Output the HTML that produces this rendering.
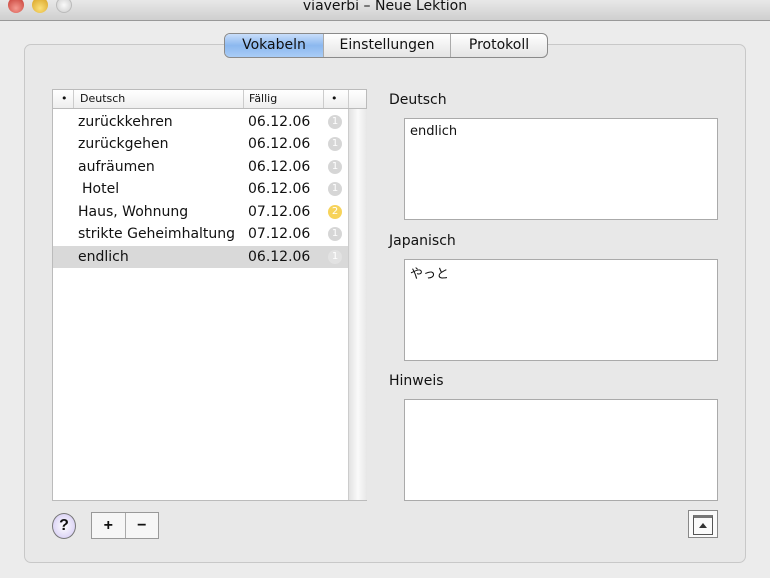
<!DOCTYPE html><html><head><meta charset="utf-8"><style>
body{margin:0;width:770px;height:578px;overflow:hidden;background:#ececec;font-family:"DejaVu Sans","Noto Sans CJK JP",sans-serif;position:relative;color:#111}
.a{position:absolute}
.title{left:0;top:0;width:770px;height:20px;background:linear-gradient(#e8e8e8,#cfcfcf);border-bottom:1px solid #999;text-align:center;font-size:14px;line-height:14px}
.light{top:-3px;width:16px;height:16px;border-radius:50%}
.group{left:24px;top:44px;width:720px;height:517px;border:1px solid #c8c8c8;border-radius:7px;background:#e8e8e8}
.tabs{left:224px;top:33px;height:23px;border:1px solid #8a8a8a;border-radius:6px;background:linear-gradient(#fff,#e4e4e4);display:flex;font-size:14px;overflow:hidden}
.tabs div{line-height:23px;border-left:1px solid #aaa;text-align:center}
.tabs div:first-child{border:0;background:linear-gradient(#c9defb,#8cb8ef 50%,#a9ccf6)}
.table{left:52px;top:89px;width:313px;height:410px;background:#fff;border:1px solid #bbb}
.hdr{left:0;top:0;width:313px;height:18px;border-bottom:1px solid #bbb;font-size:11px;line-height:18px;background:linear-gradient(#fff,#eee)}
.row{left:0;width:295px;height:22px;font-size:14px;line-height:22px}
.num{position:absolute;left:275px;top:4px;width:14px;height:14px;border-radius:50%;background:#d6d6d6;color:#fff;font-size:10px;line-height:14px;text-align:center}
.sb{left:295px;top:19px;width:18px;height:391px;background:linear-gradient(90deg,#e2e2e2,#fafafa,#e6e6e6);border-left:1px solid #ccc}
.lbl{left:389px;font-size:14px}
.box{left:404px;width:312px;height:100px;background:#fff;border:1px solid #aaa;font-size:13px}
</style></head><body>
<div class="a title"><span style="position:relative;top:-1px">viaverbi – Neue Lektion</span></div>
<div class="a light" style="left:8px;background:radial-gradient(circle at 50% 70%,#f59a90,#c0322a)"></div>
<div class="a light" style="left:32px;background:radial-gradient(circle at 50% 70%,#fbe07a,#d49a18)"></div>
<div class="a light" style="left:56px;background:radial-gradient(#fafafa,#ccc);border:1px solid #bbb;width:14px;height:14px"></div>
<div class="a group"></div>
<div class="a tabs"><div style="width:98px">Vokabeln</div><div style="width:126px">Einstellungen</div><div style="width:96px">Protokoll</div></div>
<div class="a table">
<div class="a hdr"><span class="a" style="left:8px">•</span><span class="a" style="left:20px;border-left:1px solid #ccc;padding-left:6px;top:0;height:18px">Deutsch</span><span class="a" style="left:190px;border-left:1px solid #ccc;padding-left:5px;height:18px">Fällig</span><span class="a" style="left:270px;border-left:1px solid #ccc;padding-left:7px;width:20px;height:18px">•</span><span class="a" style="left:295px;border-left:1px solid #ccc;height:18px"></span></div>
<div class="a sb"></div>
<div class="a row" style="top:21px"><span class="a" style="left:25px">zurückkehren</span><span class="a" style="left:195px">06.12.06</span><span class="num">1</span></div>
<div class="a row" style="top:43px"><span class="a" style="left:25px">zurückgehen</span><span class="a" style="left:195px">06.12.06</span><span class="num">1</span></div>
<div class="a row" style="top:66px"><span class="a" style="left:25px">aufräumen</span><span class="a" style="left:195px">06.12.06</span><span class="num">1</span></div>
<div class="a row" style="top:88px"><span class="a" style="left:29px">Hotel</span><span class="a" style="left:195px">06.12.06</span><span class="num">1</span></div>
<div class="a row" style="top:111px"><span class="a" style="left:25px">Haus, Wohnung</span><span class="a" style="left:195px">07.12.06</span><span class="num" style="background:#f7d35a">2</span></div>
<div class="a row" style="top:133px"><span class="a" style="left:25px">strikte Geheimhaltung</span><span class="a" style="left:195px">07.12.06</span><span class="num">1</span></div>
<div class="a row" style="top:156px;background:#d9d9d9"><span class="a" style="left:25px">endlich</span><span class="a" style="left:195px">06.12.06</span><span class="num" style="background:#e2e2e2">1</span></div>
</div>
<div class="a lbl" style="top:92px">Deutsch</div>
<div class="a box" style="top:118px"><div style="padding:5px 5px">endlich</div></div>
<div class="a lbl" style="top:233px">Japanisch</div>
<div class="a box" style="top:259px"><div style="padding:3px 5px">やっと</div></div>
<div class="a lbl" style="top:373px">Hinweis</div>
<div class="a box" style="top:399px"></div>
<div class="a" style="left:52px;top:513px;width:22px;height:24px;border-radius:50%;border:1px solid #777;background:radial-gradient(#fff,#cfc4f2);text-align:center;font:bold 16px/24px 'Liberation Sans',sans-serif">?</div>
<div class="a" style="left:91px;top:512px;width:66px;height:25px;border:1px solid #999;background:#f6f6f6;font:bold 16px/25px 'Liberation Sans',sans-serif;display:flex"><div style="width:33px;text-align:center;border-right:1px solid #aaa">+</div><div style="width:33px;text-align:center">−</div></div>
<div class="a" style="left:688px;top:510px;width:28px;height:26px;border:1px solid #888;background:#fafafa"><div class="a" style="left:4px;top:4px;width:18px;height:16px;border:1px solid #555;border-top:3px solid #777"></div><div class="a" style="left:10px;top:12px;width:0;height:0;border-left:4px solid transparent;border-right:4px solid transparent;border-bottom:5px solid #333"></div></div>
</body></html>
